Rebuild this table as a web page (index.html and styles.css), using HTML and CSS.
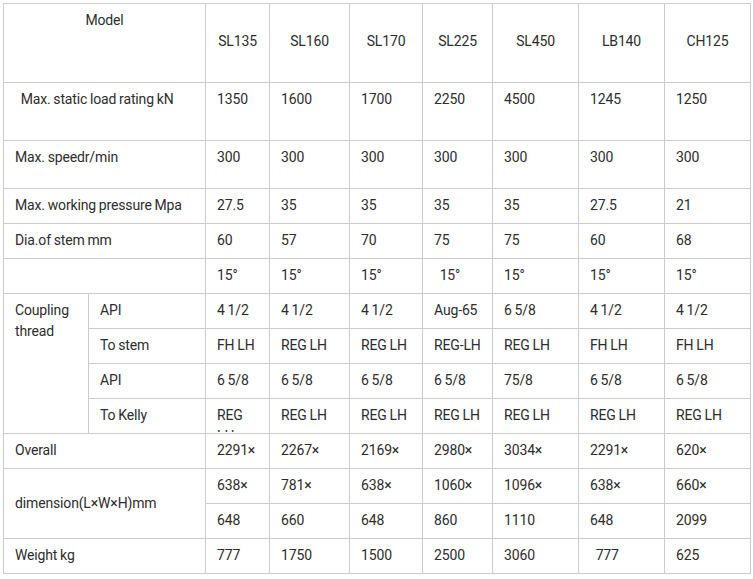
FILE: index.html
```html
<!DOCTYPE html>
<html>
<head>
<meta charset="utf-8">
<link rel="stylesheet" href="styles.css">
</head>
<body>
<table class="spec">
  <colgroup>
    <col class="ca"><col class="cb"><col class="c1"><col class="c2"><col class="c3"><col class="c4"><col class="c5"><col class="c6"><col class="c7">
  </colgroup>
  <tbody>
    <tr class="r-head">
      <td colspan="2" class="hd hd-top">Model</td>
      <td class="hd">SL135</td><td class="hd">SL160</td><td class="hd">SL170</td><td class="hd">SL225</td><td class="hd">SL450</td><td class="hd">LB140</td><td class="hd">CH125</td>
    </tr>
    <tr class="r-58">
      <td colspan="2">&nbsp;&nbsp;Max. static load rating kN</td>
      <td>1350</td><td>1600</td><td>1700</td><td>2250</td><td>4500</td><td>1245</td><td>1250</td>
    </tr>
    <tr class="r-48">
      <td colspan="2">Max. speedr/min</td>
      <td>300</td><td>300</td><td>300</td><td>300</td><td>300</td><td>300</td><td>300</td>
    </tr>
    <tr class="r">
      <td colspan="2">Max. working pressure Mpa</td>
      <td>27.5</td><td>35</td><td>35</td><td>35</td><td>35</td><td>27.5</td><td>21</td>
    </tr>
    <tr class="r">
      <td colspan="2">Dia.of stem mm</td>
      <td>60</td><td>57</td><td>70</td><td>75</td><td>75</td><td>60</td><td>68</td>
    </tr>
    <tr class="r">
      <td colspan="2"></td>
      <td>15°</td><td>15°</td><td>15°</td><td>&nbsp;&nbsp;15°</td><td>15°</td><td>15°</td><td>15°</td>
    </tr>
    <tr class="r">
      <td rowspan="4" class="wrap">Coupling thread</td>
      <td>API</td>
      <td>4 1/2</td><td>4 1/2</td><td>4 1/2</td><td>Aug-65</td><td>6 5/8</td><td>4 1/2</td><td>4 1/2</td>
    </tr>
    <tr class="r">
      <td>To stem</td>
      <td>FH LH</td><td>REG LH</td><td>REG LH</td><td>REG-LH</td><td>REG LH</td><td>FH LH</td><td>FH LH</td>
    </tr>
    <tr class="r">
      <td>API</td>
      <td>6 5/8</td><td>6 5/8</td><td>6 5/8</td><td>6 5/8</td><td>75/8</td><td>6 5/8</td><td>6 5/8</td>
    </tr>
    <tr class="r">
      <td>To Kelly</td>
      <td><div class="clip">REG LH</div></td><td>REG LH</td><td>REG LH</td><td>REG LH</td><td>REG LH</td><td>REG LH</td><td>REG LH</td>
    </tr>
    <tr class="r">
      <td colspan="2">Overall</td>
      <td>2291×</td><td>2267×</td><td>2169×</td><td>2980×</td><td>3034×</td><td>2291×</td><td>620×</td>
    </tr>
    <tr class="r">
      <td colspan="2" rowspan="2" class="mid">dimension(L×W×H)mm</td>
      <td>638×</td><td>781×</td><td>638×</td><td>1060×</td><td>1096×</td><td>638×</td><td>660×</td>
    </tr>
    <tr class="r">
      <td>648</td><td>660</td><td>648</td><td>860</td><td>1110</td><td>648</td><td>2099</td>
    </tr>
    <tr class="r">
      <td colspan="2">Weight kg</td>
      <td>777</td><td>1750</td><td>1500</td><td>2500</td><td>3060</td><td>&nbsp;&nbsp;777</td><td>625</td>
    </tr>
  </tbody>
</table>
</body>
</html>
```
FILE: styles.css
```css
html, body {
  margin: 0;
  background: #fff;
}
body {
  padding: 3px 0 0 3px;
  font-family: Roboto, "Liberation Sans", sans-serif;
  font-size: 14px;
  letter-spacing: -0.15px;
  word-spacing: -0.5px;
  color: #2d2d2d;
}
.spec {
  border-collapse: collapse;
  table-layout: fixed;
  width: 748px;
}
.ca { width: 85px; }
.cb { width: 117px; }
.c1 { width: 64px; }
.c2 { width: 80px; }
.c3 { width: 73px; }
.c4 { width: 70px; }
.c5 { width: 86px; }
.c6 { width: 86px; }
.c7 { width: 86px; }
.spec td {
  border: 1px solid #cccccc;
  padding: 6px 0 0 11px;
  vertical-align: top;
  line-height: 21px;
  overflow: hidden;
  white-space: nowrap;
}
.spec td.wrap { white-space: normal; }
.r-head { height: 79px; }
.r-58 { height: 58px; }
.r-48 { height: 48px; }
.r { height: 35px; }
.spec td.hd {
  text-align: center;
  vertical-align: middle;
  padding: 0 0 3px 0;
}
.spec td.hd-top {
  vertical-align: top;
  padding-top: 6px;
}
.spec td.mid {
  vertical-align: middle;
  padding-top: 0;
}
.clip {
  width: 32px;
  height: 27px;
  overflow: hidden;
  white-space: normal;
}
```
